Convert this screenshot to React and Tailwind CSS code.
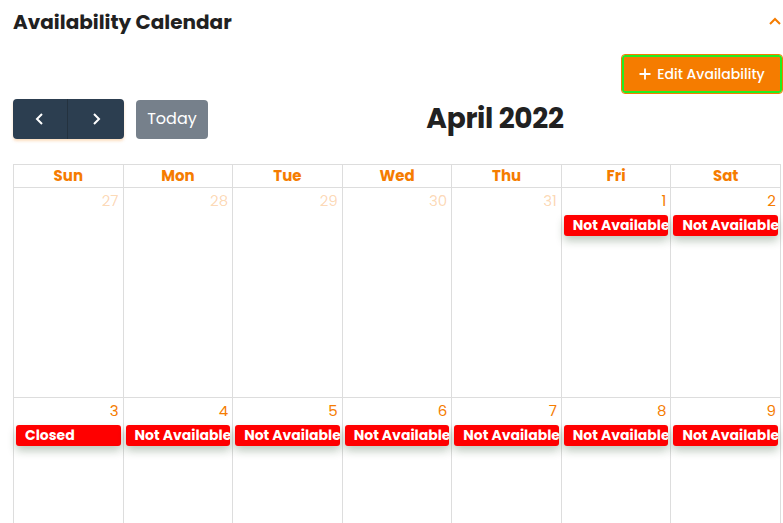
import React from 'react';

const days = ['Sun', 'Mon', 'Tue', 'Wed', 'Thu', 'Fri', 'Sat'];

const weeks = [
  [
    { d: 27, other: true },
    { d: 28, other: true },
    { d: 29, other: true },
    { d: 30, other: true },
    { d: 31, other: true },
    { d: 1, ev: 'Not Available' },
    { d: 2, ev: 'Not Available' },
  ],
  [
    { d: 3, ev: 'Closed' },
    { d: 4, ev: 'Not Available' },
    { d: 5, ev: 'Not Available' },
    { d: 6, ev: 'Not Available' },
    { d: 7, ev: 'Not Available' },
    { d: 8, ev: 'Not Available' },
    { d: 9, ev: 'Not Available' },
  ],
];

function Cell({ cell }) {
  return (
    <div className="border-r border-b border-[#dddddd] h-[210px] flex flex-col min-w-0">
      <div
        className={`text-right text-[15px] leading-[22px] pr-[4px] pt-[2px] ${
          cell.other ? 'text-[#f57c00]/30' : 'text-[#f57c00]'
        }`}
      >
        {cell.d}
      </div>
      {cell.ev && (
        <div className="mx-[2px] mt-[3px] h-[21px] bg-[#ff0000] rounded-[3px] pl-[9px] text-white text-[14px] font-bold leading-[21px] whitespace-nowrap overflow-hidden shadow-[0_5px_9px_rgba(30,70,30,0.28)]">
          {cell.ev}
        </div>
      )}
    </div>
  );
}

export default function App() {
  return (
    <div className="w-[783px] h-[523px] overflow-hidden bg-white font-['Poppins','Open_Sans',sans-serif] text-[#222]">
      <div className="pl-[13px] pr-[1px]">
        <div className="flex items-center justify-between h-[44px]">
          <h2 className="text-[20px] font-bold text-[#212121]">Availability Calendar</h2>
          <svg width="14" height="10" viewBox="0 0 14 10">
            <path d="M2 7 L7 2 L12 7" stroke="#f57c00" strokeWidth="2" fill="none" />
          </svg>
        </div>

        <div className="flex justify-end mt-[11px]">
          <button className="h-[38px] w-[160px] bg-[#f57c00] rounded-[3px] border-[2px] border-[#22ee22] outline outline-1 outline-[#f57c00] flex items-center justify-center gap-[6px] text-white text-[14px] font-medium">
            <svg width="12" height="12" viewBox="0 0 12 12">
              <path d="M6 0.5 V11.5 M0.5 6 H11.5" stroke="white" strokeWidth="1.8" />
            </svg>
            Edit Availability
          </button>
        </div>

        <div className="flex items-center mt-[6px] h-[40px]">
          <div className="flex h-[40px] rounded-[4px] overflow-hidden shadow-[0_2px_3px_rgba(245,124,0,0.25)]">
            <button className="w-[55px] bg-[#2c3e50] flex items-center justify-center border-r border-[#24323f]">
              <svg width="12" height="14" viewBox="0 0 12 14">
                <path d="M8 2 L3 7 L8 12" stroke="white" strokeWidth="2" fill="none" />
              </svg>
            </button>
            <button className="w-[56px] bg-[#2c3e50] flex items-center justify-center">
              <svg width="12" height="14" viewBox="0 0 12 14">
                <path d="M4 2 L9 7 L4 12" stroke="white" strokeWidth="2" fill="none" />
              </svg>
            </button>
          </div>
          <button className="ml-[12px] w-[72px] h-[39px] bg-[#76808b] rounded-[4px] text-white text-[16px]">
            Today
          </button>
          <div className="flex-1 text-center text-[28px] font-bold text-[#212121] tracking-[-0.3px]">
            April 2022
          </div>
        </div>

        <div className="mt-[25px] border-l border-t border-[#dddddd] w-[768px]">
          <div className="grid grid-cols-7">
            {days.map((d) => (
              <div
                key={d}
                className="border-r border-b border-[#dddddd] h-[23px] text-center text-[15px] font-bold text-[#f57c00] leading-[22px]"
              >
                {d}
              </div>
            ))}
          </div>
          {weeks.map((w, i) => (
            <div key={i} className="grid grid-cols-7">
              {w.map((c, j) => (
                <Cell key={j} cell={c} />
              ))}
            </div>
          ))}
        </div>
      </div>
    </div>
  );
}
